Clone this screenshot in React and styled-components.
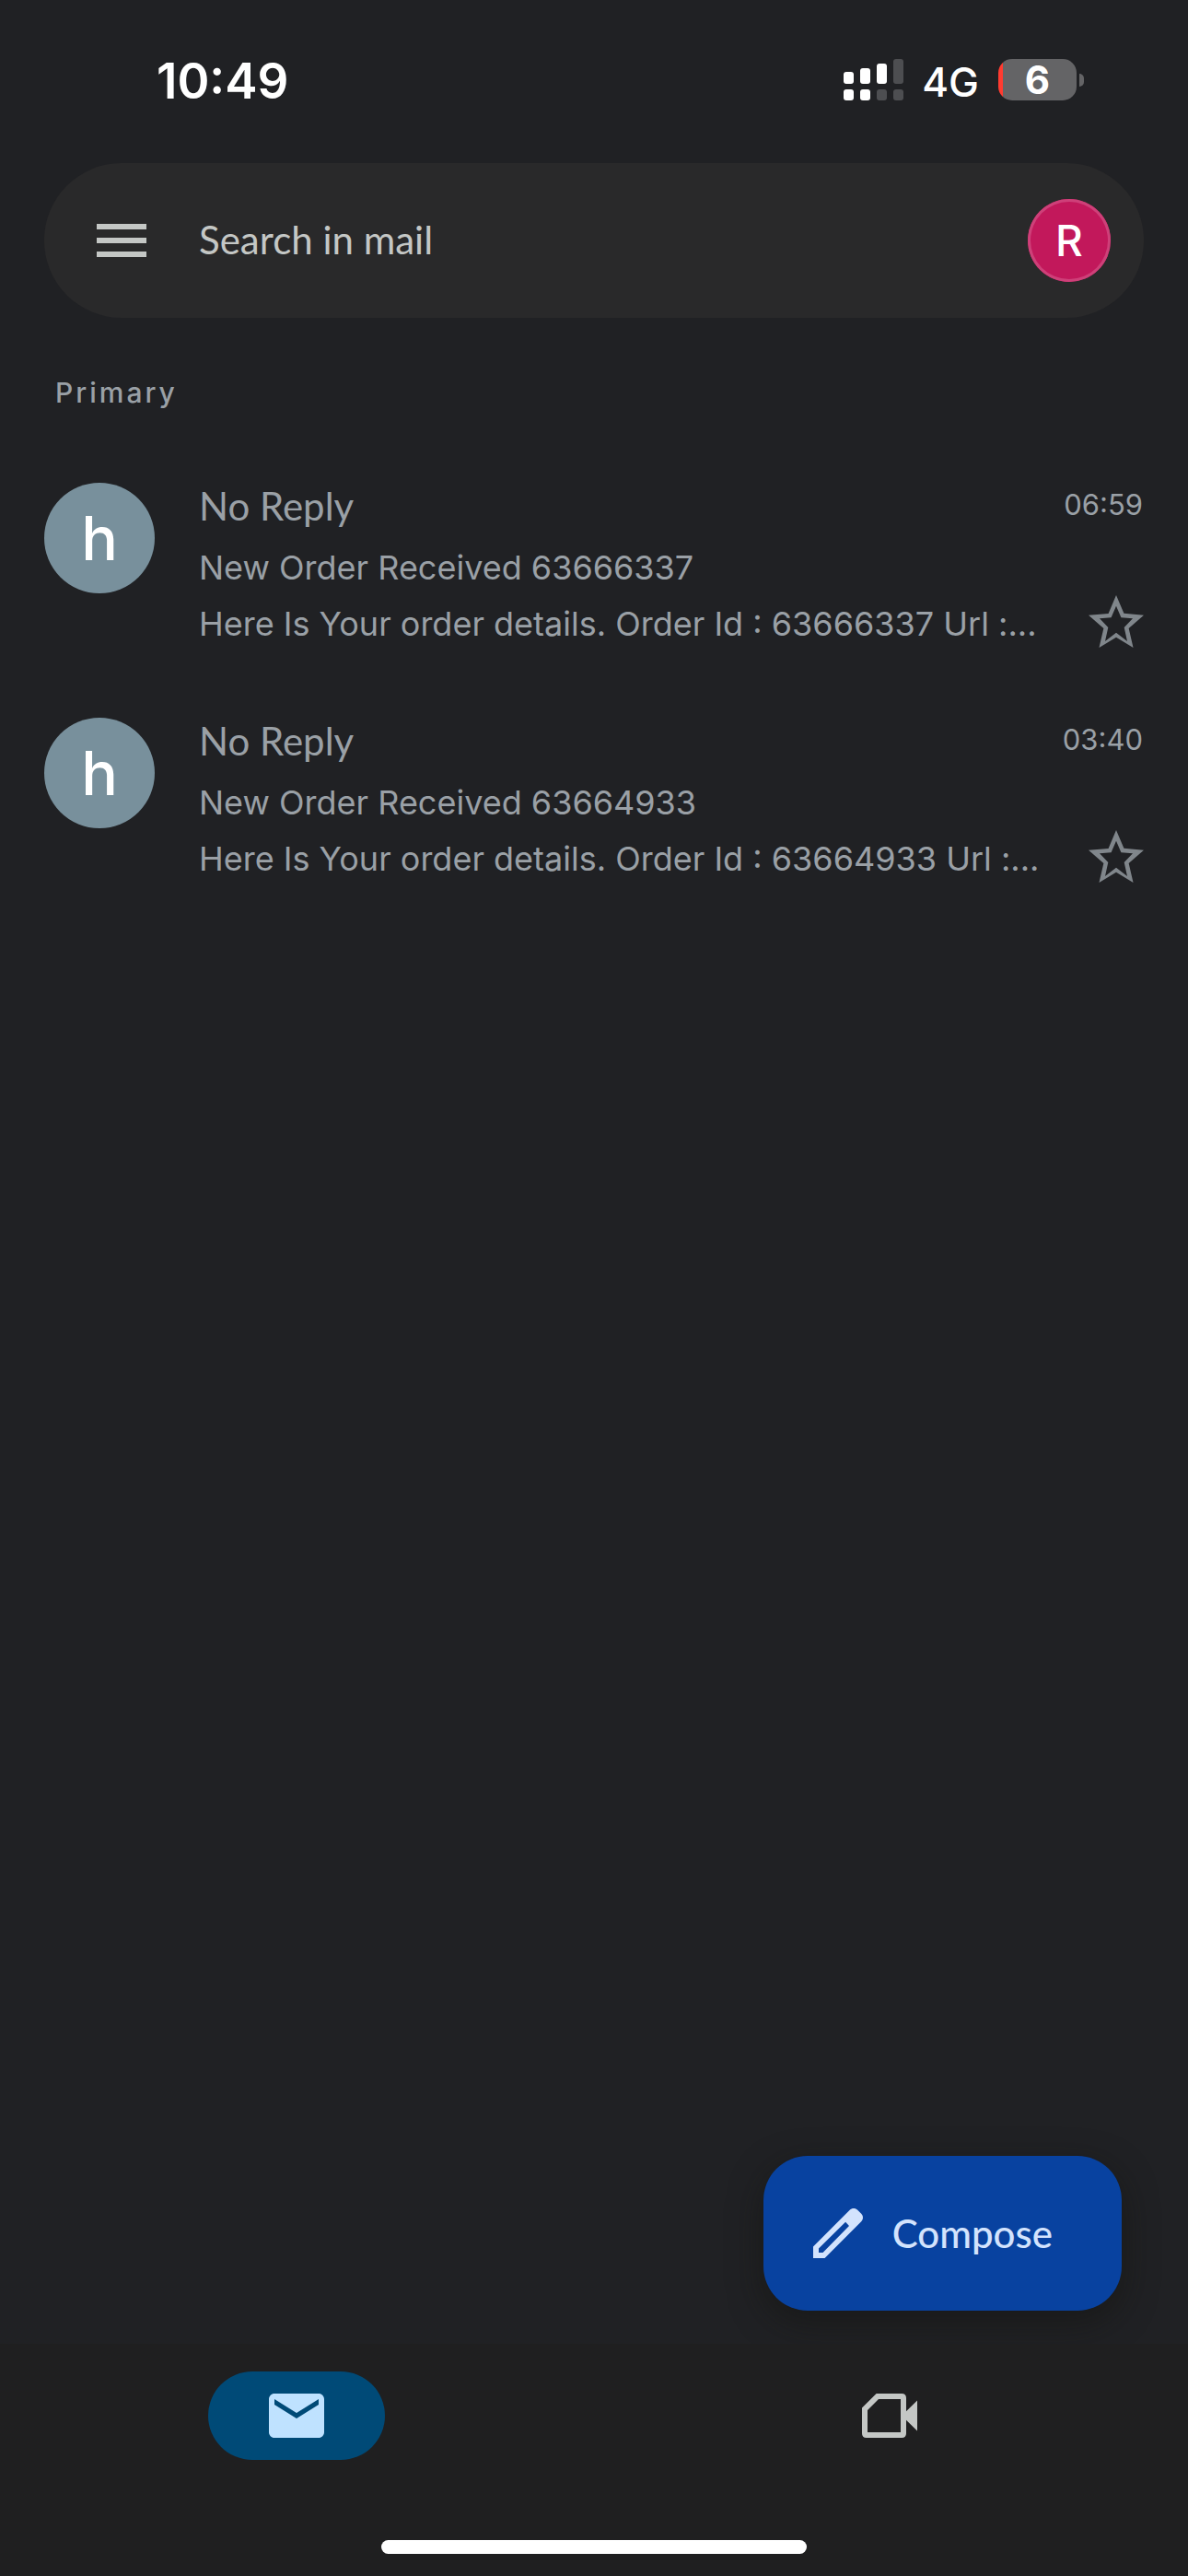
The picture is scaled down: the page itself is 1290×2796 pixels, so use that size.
import React from "react";
import styled, { createGlobalStyle } from "styled-components";

const ui = `Inter, "Liberation Sans", sans-serif`;
const brand = `Lato, Inter, "Liberation Sans", sans-serif`;

const GlobalStyle = createGlobalStyle`
  *, *::before, *::after { box-sizing: border-box; }
  body { margin: 0; background: #202124; font-family: ${ui}; }
  button, input { font: inherit; color: inherit; border: 0; padding: 0; margin: 0; background: none; }
  h1, h2, p, ul { margin: 0; padding: 0; font-weight: 400; }
  ul { list-style: none; }
`;

const Screen = styled.div`
  min-height: 100vh;
  display: flex;
  flex-direction: column;
  color: #9aa0a6;
`;

const StatusBar = styled.header`
  height: 177px;
  padding: 0 113px 0 170px;
  display: flex;
  justify-content: space-between;
  color: #fff;
`;

const Clock = styled.time`
  padding-top: 56px;
  font-size: 53px;
  line-height: 64px;
  font-weight: 600;
`;

const StatusIcons = styled.div`
  height: 45px;
  margin-top: 64px;
  display: flex;
  align-items: center;
`;

const Network = styled.span`
  margin: 4px 21px 0 20px;
  font-size: 44px;
  line-height: 44px;
  font-weight: 500;
`;

const Battery = styled.div`
  width: 85px;
  height: 45px;
  border-radius: 15px;
  background: linear-gradient(to right, #ff3b30 5px, #646466 5px);
  font-size: 42px;
  line-height: 45px;
  font-weight: 700;
  text-align: center;
`;

const BatteryTip = styled.div`
  width: 5px;
  height: 14px;
  margin-left: 3px;
  border-radius: 0 5px 5px 0;
  background: #646466;
`;

const SearchBar = styled.form`
  height: 168px;
  margin: 0 48px;
  padding: 0 36px 0 48px;
  border-radius: 84px;
  background: #29292a;
  display: flex;
  align-items: center;
`;

const IconButton = styled.button`
  display: flex;
  cursor: pointer;
`;

const SearchInput = styled.input`
  flex: 1;
  min-width: 0;
  margin-left: 48px;
  padding-bottom: 2px;
  font-family: ${brand};
  font-size: 42px;
  line-height: 56px;
  color: #c4c7c5;
  outline: none;
  &::placeholder { color: #c4c7c5; opacity: 1; }
`;

const Account = styled.button`
  width: 90px;
  height: 90px;
  border-radius: 50%;
  background: #c2185b;
  box-shadow: inset 0 0 0 3px #ce4079;
  color: #fff;
  font-size: 46px;
  font-weight: 500;
  cursor: pointer;
`;

const Category = styled.h1`
  margin: 61px 60px 0;
  font-size: 30px;
  line-height: 40px;
  font-weight: 500;
  letter-spacing: 3px;
`;

const MailList = styled.ul`
  margin-top: 78px;
  padding: 0 42px 0 48px;
  display: flex;
  flex-direction: column;
  gap: 67px;
  flex: 1;
`;

const MailRow = styled.li`
  display: grid;
  grid-template-columns: 120px minmax(0, 1fr) 96px;
  column-gap: 48px;
`;

const Avatar = styled.div`
  width: 120px;
  height: 120px;
  border-radius: 50%;
  background: #78909c;
  color: #fff;
  font-size: 66px;
  line-height: 120px;
  font-weight: 500;
  text-align: center;
`;

const Sender = styled.h2`
  margin-bottom: 3px;
  font-family: ${brand};
  font-size: 42px;
  line-height: 50px;
`;

const Line = styled.p`
  font-size: 36px;
  line-height: 44px;
  white-space: nowrap;
`;

const Message = styled.div`
  display: flex;
  flex-direction: column;
  gap: 17px;
`;

const Meta = styled.div`
  display: flex;
  flex-direction: column;
  gap: 68px;
  align-items: flex-end;
`;

const SentAt = styled.time`
  padding-right: 7px;
  font-size: 31px;
  line-height: 48px;
`;

const Fab = styled.button`
  align-self: flex-end;
  height: 168px;
  margin: 0 72px 36px;
  padding: 0 75px 0 45px;
  border-radius: 48px;
  background: #0842a0;
  box-shadow: 0 12px 36px rgba(18, 18, 14, 0.5);
  display: flex;
  align-items: center;
  gap: 23px;
  cursor: pointer;
`;

const FabLabel = styled.span`
  font-family: ${brand};
  font-size: 42px;
  line-height: 48px;
  font-weight: 500;
  color: #d3e3fd;
`;

const BottomBar = styled.nav`
  height: 252px;
  padding: 30px 0 24px;
  background: #1f1f20;
  display: flex;
  flex-direction: column;
  justify-content: space-between;
  align-items: center;
`;

const Tabs = styled.div`
  width: 100%;
  padding-right: 2px;
  display: flex;
  justify-content: space-around;
`;

const Tab = styled.button`
  width: 192px;
  height: 96px;
  border-radius: 48px;
  background: ${(p) => (p.$active ? "#004a77" : "none")};
  display: flex;
  align-items: center;
  justify-content: center;
  cursor: pointer;
`;

const HomeIndicator = styled.div`
  width: 462px;
  height: 15px;
  border-radius: 8px;
  background: #fff;
`;

function Icon({ color, d, size = 72 }) {
  return (
    <svg width={size} height={size} viewBox="0 0 24 24" fill={color} fillRule="evenodd" aria-hidden="true">
      <path d={d} />
    </svg>
  );
}

const MENU = "M3 6h18v2H3zM3 11h18v2H3zM3 16h18v2H3z";
const STAR =
  "M22 9.24l-7.19-.62L12 2 9.19 8.63 2 9.24l5.46 4.73L5.82 21 12 17.27 18.18 21l-1.63-7.03zM12 5.9l1.8 4.2 4.2.35-3.1 3.25 1.1 4.97-4-3.12-4 3.12 1.1-4.97L6 10.45l4.2-.35z";
const PENCIL =
  "M20.41 4.94l-1.35-1.35c-.78-.78-2.05-.78-2.83 0L3 16.82V21h4.18L20.41 7.77c.79-.78.79-2.05 0-2.83zM6.5 19H5v-1.5l9.7-9.6 1.3 1.4z";
const MAIL =
  "M20 4H4c-1.1 0-2 .9-2 2v12c0 1.1.9 2 2 2h16c1.1 0 2-.9 2-2V6c0-1.1-.9-2-2-2zm0 4l-8 5-8-5V6l8 5 8-5v2z";
const VIDEO =
  "M7.2 4H16.4Q18 4 18 5.6V10.4L22 6.5V17.5L18 13.6V18.4Q18 20 16.4 20H3.6Q2 20 2 18.4V9.2zM8 6L4 10V18H16V6z";

function Signal() {
  const bars = [[0, 14, 1], [18, 10, 1], [36, 5, 1], [54, 0, 0]];
  return (
    <svg width="65" height="45" viewBox="0 0 65 45" role="img" aria-label="Signal">
      {bars.map(([x, y, on], i) => (
        <g key={x}>
          <rect x={x} y={y} width="11" height={27 - y} rx="3" fill={on ? "#fff" : "#4d4e51"} />
          <rect x={x} y="33" width="11" height="12" rx="3" fill={i < 2 ? "#fff" : "#4d4e51"} />
        </g>
      ))}
    </svg>
  );
}

const mails = [
  { id: "63666337", time: "06:59" },
  { id: "63664933", time: "03:40" },
];

export default function App() {
  return (
    <Screen>
      <GlobalStyle />
      <StatusBar>
        <Clock>10:49</Clock>
        <StatusIcons>
          <Signal />
          <Network>4G</Network>
          <Battery>6</Battery>
          <BatteryTip />
        </StatusIcons>
      </StatusBar>
      <SearchBar role="search">
        <IconButton type="button" aria-label="Menu">
          <Icon color="#c4c7c5" d={MENU} />
        </IconButton>
        <SearchInput type="text" aria-label="Search in mail" placeholder="Search in mail" />
        <Account type="button">R</Account>
      </SearchBar>
      <Category>Primary</Category>
      <MailList>
        {mails.map((mail) => (
          <MailRow key={mail.id}>
            <Avatar>h</Avatar>
            <Message>
              <Sender>No Reply</Sender>
              <Line>New Order Received {mail.id}</Line>
              <Line>Here Is Your order details. Order Id : {mail.id} Url :...</Line>
            </Message>
            <Meta>
              <SentAt>{mail.time}</SentAt>
              <IconButton type="button" aria-label="Star">
                <Icon color="#80868b" d={STAR} />
              </IconButton>
            </Meta>
          </MailRow>
        ))}
      </MailList>
      <Fab type="button">
        <Icon color="#d3e3fd" d={PENCIL} />
        <FabLabel>Compose</FabLabel>
      </Fab>
      <BottomBar>
        <Tabs>
          <Tab type="button" aria-label="Mail" $active>
            <Icon color="#bfe2ff" d={MAIL} />
          </Tab>
          <Tab type="button" aria-label="Meet">
            <Icon color="#c4c7c5" d={VIDEO} />
          </Tab>
        </Tabs>
        <HomeIndicator />
      </BottomBar>
    </Screen>
  );
}
